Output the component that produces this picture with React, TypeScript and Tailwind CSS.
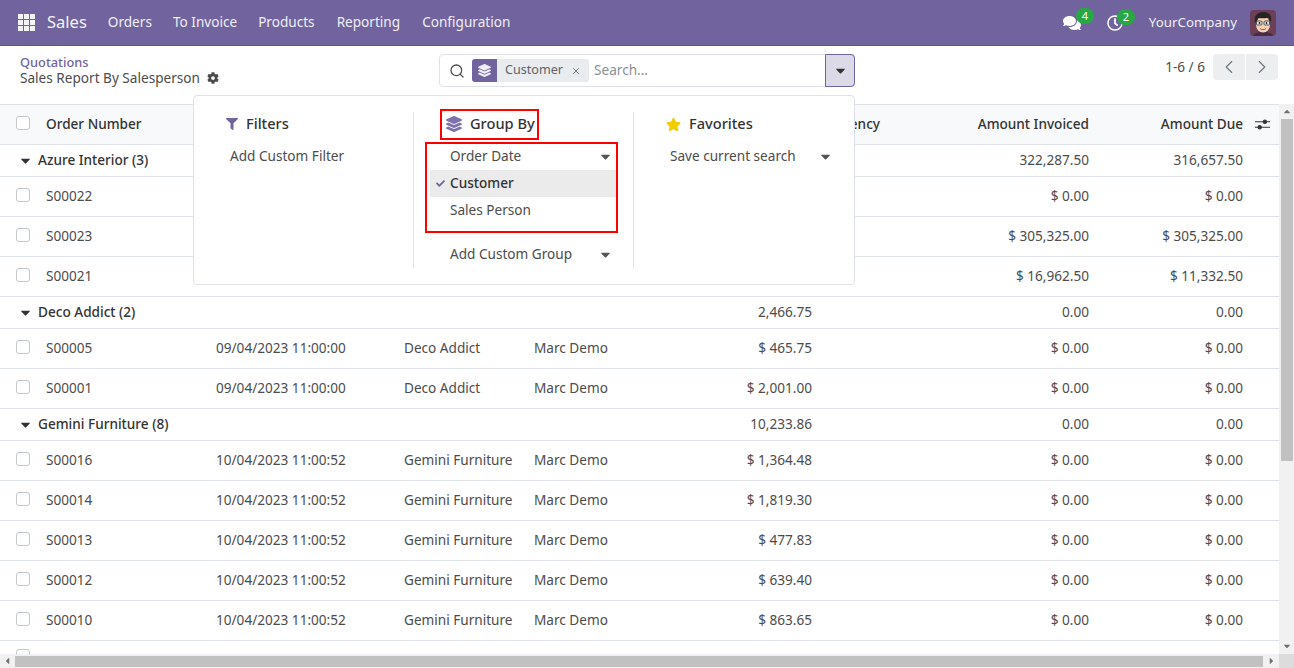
import React from "react";
import { FaComments, FaRegClock, FaCog, FaFilter, FaLayerGroup, FaStar, FaCheck, FaCaretDown } from "react-icons/fa";
import { ChevronLeft, ChevronRight, Search, X } from "lucide-react";

const cols = "grid grid-cols-[46px_170px_188px_130px_100px_178px_68px_209px_154px_36px] items-center";

type Row = { n: string; d: string; c: string; s: string; t: string; i: string; a: string };
type Group = { name: string; t: string; i: string; a: string; rows: Row[] };

const az = "Azure Interior";
const gf = "Gemini Furniture";
const groups: Group[] = [
  { name: "Azure Interior (3)", t: "322,287.50", i: "322,287.50", a: "316,657.50", rows: [
    { n: "S00022", d: "10/04/2023 11:00:52", c: az, s: "Marc Demo", t: "$ 0.00", i: "$ 0.00", a: "$ 0.00" },
    { n: "S00023", d: "10/04/2023 11:00:52", c: az, s: "Marc Demo", t: "$ 305,325.00", i: "$ 305,325.00", a: "$ 305,325.00" },
    { n: "S00021", d: "10/04/2023 11:00:52", c: az, s: "Marc Demo", t: "$ 16,962.50", i: "$ 16,962.50", a: "$ 11,332.50" },
  ]},
  { name: "Deco Addict (2)", t: "2,466.75", i: "0.00", a: "0.00", rows: [
    { n: "S00005", d: "09/04/2023 11:00:00", c: "Deco Addict", s: "Marc Demo", t: "$ 465.75", i: "$ 0.00", a: "$ 0.00" },
    { n: "S00001", d: "09/04/2023 11:00:00", c: "Deco Addict", s: "Marc Demo", t: "$ 2,001.00", i: "$ 0.00", a: "$ 0.00" },
  ]},
  { name: "Gemini Furniture (8)", t: "10,233.86", i: "0.00", a: "0.00", rows: [
    { n: "S00016", d: "10/04/2023 11:00:52", c: gf, s: "Marc Demo", t: "$ 1,364.48", i: "$ 0.00", a: "$ 0.00" },
    { n: "S00014", d: "10/04/2023 11:00:52", c: gf, s: "Marc Demo", t: "$ 1,819.30", i: "$ 0.00", a: "$ 0.00" },
    { n: "S00013", d: "10/04/2023 11:00:52", c: gf, s: "Marc Demo", t: "$ 477.83", i: "$ 0.00", a: "$ 0.00" },
    { n: "S00012", d: "10/04/2023 11:00:52", c: gf, s: "Marc Demo", t: "$ 639.40", i: "$ 0.00", a: "$ 0.00" },
    { n: "S00010", d: "10/04/2023 11:00:52", c: gf, s: "Marc Demo", t: "$ 863.65", i: "$ 0.00", a: "$ 0.00" },
  ]},
];

function Check() {
  return <span className="block w-[14px] h-[14px] ml-4 -mt-[3px] rounded-[3px] border border-[#c4c7cb] bg-white" />;
}

function Avatar() {
  return (
    <svg viewBox="0 0 26 26" className="w-[26px] h-[26px] rounded-[4px]">
      <rect width="26" height="26" fill="#6b3f58" />
      <path d="M3 26c1-3 5-4 10-4s9 1 10 4z" fill="#4a2c3f" />
      <ellipse cx="13" cy="14.500" rx="7" ry="8" fill="#f3d3ba" />
      <path d="M5 12C3.500 6 8 1.500 14 2c5 .5 8 3 7 9l-1.500 1-.5-4.500c-4 1-9 1-11 .5L6.500 13z" fill="#272424" />
      <rect x="6.500" y="11" width="5.500" height="4" rx="1" fill="#e8e8e4" stroke="#444" strokeWidth=".9" />
      <rect x="14" y="11" width="5.500" height="4" rx="1" fill="#e8e8e4" stroke="#444" strokeWidth=".9" />
      <circle cx="9.500" cy="13" r=".9" fill="#222" />
      <circle cx="16.500" cy="13" r=".9" fill="#222" />
      <path d="M10 18.500c1.500 1.500 4.500 1.500 6 0" stroke="#a5533f" strokeWidth="1" fill="none" />
    </svg>
  );
}

function Apps() {
  return (
    <svg viewBox="0 0 17 17" className="w-[17px] h-[17px]" fill="#f4f3f8">
      {[0, 6, 12].map((y) => [0, 6, 12].map((x) => <rect key={`${x}-${y}`} x={x} y={y} width="5" height="5" />))}
    </svg>
  );
}

function Sliders() {
  return (
    <svg viewBox="0 0 16 13" className="w-[15px] h-[13px]" fill="#333" stroke="#333" strokeWidth="1.100">
      <path d="M0 3.500h16M0 9.500h16" fill="none" />
      <circle cx="10.500" cy="3.500" r="1.800" />
      <circle cx="5" cy="9.500" r="1.800" />
    </svg>
  );
}

function Badge({ v, className }: { v: string; className: string }) {
  return <span className={`absolute -top-[6px] w-[18px] h-[16px] rounded-full bg-[#28a745] text-white text-[11px] leading-[15px] text-center ${className}`}>{v}</span>;
}

export default function App() {
  return (
    <div className="relative h-screen flex flex-col overflow-hidden bg-white text-[13.6px] text-[#4c4c4c] font-['Noto_Sans','Liberation_Sans',sans-serif]">
      <header className="h-[46px] shrink-0 flex items-center bg-[#71639e] border-b border-[#5f5389] text-[#f0eef5]">
        <span className="ml-[18px] mr-[12px]"><Apps /></span>
        <span className="text-[16.5px] mr-[21px] text-[#f4f3f8]">Sales</span>
        <nav className="flex gap-[21px]">
          <span>Orders</span><span>To Invoice</span><span>Products</span><span className="ml-px">Reporting</span><span className="ml-px">Configuration</span>
        </nav>
        <div className="ml-auto flex items-center">
          <span className="relative mr-[26px] text-white"><FaComments size={18} /><Badge v="4" className="left-[13px]" /></span>
          <span className="relative mr-[26px] text-white"><FaRegClock size={16} /><Badge v="2" className="left-[10px]" /></span>
          <span className="mr-[13px] text-[13.3px]">YourCompany</span>
          <span className="mr-[18px] flex"><Avatar /></span>
        </div>
      </header>

      <section className="h-[58px] shrink-0 flex relative">
        <div className="w-[439px] pl-5 pt-[8px] leading-[16px]">
          <div className="text-[12.8px] text-[#71639e] font-medium">Quotations</div>
          <div className="flex items-center gap-[7px]">Sales Report By Salesperson <FaCog size={12} className="text-[#4c4c4c]" /></div>
        </div>
        <div className="mt-2 w-[416px] h-[33px] flex rounded-[4px] border border-[#dee2e6] relative">
          <span className="ml-[9px] mr-[7px] self-center"><Search size={16} strokeWidth={1.9} className="text-[#4c4c4c]" /></span>
          <div className="self-center h-[23px] flex items-center rounded-[3px] bg-[#e9ecef] text-[12.6px] text-[#5f6368]">
            <span className="w-[25px] h-full flex items-center justify-center bg-[#71639e] rounded-l-[3px] text-[#efedf5]"><FaLayerGroup size={13} /></span>
            <span className="ml-2">Customer</span>
            <X size={10} strokeWidth={2} className="ml-[8px] mr-[8px]" />
          </div>
          <span className="ml-[5px] self-center text-[#8a8f95] -mt-px">Search...</span>
          <button className="ml-auto w-[30px] -my-px -mr-px flex items-center justify-center rounded-r-[4px] border border-[#71639e] bg-[#dcdae7] text-[#333]"><FaCaretDown size={15} /></button>
        </div>
        <div className="ml-auto flex items-start pt-2 mr-[16px]">
          <span className="mt-[3px] mr-2">1-6 / 6</span>
          <span className="w-[32px] h-[26px] flex items-center justify-center bg-[#eceef0] rounded-l-[4px] mr-px text-[#6c757d]"><ChevronLeft size={22} strokeWidth={1.2} /></span>
          <span className="w-[32px] h-[26px] flex items-center justify-center bg-[#eceef0] rounded-r-[4px] text-[#6c757d]"><ChevronRight size={22} strokeWidth={1.2} /></span>
        </div>
      </section>

      <main className="flex-1 min-h-0 flex flex-col">
        <div className="flex-1 min-h-0 flex">
          <div className="flex-1 min-w-0 overflow-hidden border-t border-[#dee2e6]">
            <div className={`${cols} h-[40px] bg-[#f8f9fa] border-b border-[#dee2e6] font-medium text-[#333]`}>
              <Check />
              <span className="col-span-4">Order Number</span>
              <span />
              <span className="text-right">Currency</span>
              <span className="text-right">Amount Invoiced</span>
              <span className="text-right">Amount Due</span>
              <span className="pl-3 flex"><Sliders /></span>
            </div>
            {groups.map((g) => (
              <div key={g.name}>
                <div className={`${cols} h-[32px] border-b border-[#dee2e6] font-medium text-[#333]`}>
                  <span className="col-span-5 pl-[18px] flex items-center gap-[5px]"><FaCaretDown size={15} />{g.name}</span>
                  <span className="text-right font-normal text-[#4c4c4c]">{g.t}</span>
                  <span />
                  <span className="text-right font-normal text-[#4c4c4c]">{g.i}</span>
                  <span className="text-right font-normal text-[#4c4c4c]">{g.a}</span>
                </div>
                {g.rows.map((r) => (
                  <div key={r.n} className={`${cols} h-[40px] border-b border-[#dee2e6]`}>
                    <Check />
                    <span>{r.n}</span>
                    <span>{r.d}</span>
                    <span>{r.c}</span>
                    <span>{r.s}</span>
                    <span className="text-right">{r.t}</span>
                    <span />
                    <span className="text-right">{r.i}</span>
                    <span className="text-right">{r.a}</span>
                  </div>
                ))}
              </div>
            ))}
            <div className="h-[40px] pt-[11px]"><Check /></div>
          </div>
          <div className="w-[15px] shrink-0 flex flex-col items-center bg-[#f1f1f1] text-[#6f6f6f]">
            <FaCaretDown size={10} className="rotate-180 mt-[3px]" />
            <div className="w-[12px] h-[342px] mt-[2px] bg-[#c1c1c1]" />
            <FaCaretDown size={10} className="mt-auto mb-[3px]" />
          </div>
        </div>
        <div className="h-[14px] shrink-0 flex items-center bg-[#f1f1f1] text-[#6f6f6f]">
          <span className="w-[15px] flex justify-center"><FaCaretDown size={10} className="rotate-90" /></span>
          <div className="w-[1248px] h-[11px] bg-[#c1c1c1]" />
          <span className="w-[16px] flex justify-center"><FaCaretDown size={10} className="-rotate-90" /></span>
          <span className="w-[15px] h-full bg-[#dcdcdc]" />
        </div>
      </main>

      <div className="absolute left-[193px] top-[95px] w-[662px] h-[190px] flex pt-4 bg-white rounded-[4px] border border-[#dee2e6]">
        <div className="w-[220px] h-[156px] border-r border-[#dee2e6]">
          <div className="pl-[32px] h-[24px] flex items-center gap-[8px] font-medium text-[#333] text-[14.6px]"><FaFilter size={12} className="text-[#71639e]" />Filters</div>
          <div className="pl-[36px] mt-[10px]">Add Custom Filter</div>
        </div>
        <div className="w-[220px] h-[156px] border-r border-[#dee2e6] relative">
          <div className="pl-[32px] h-[24px] flex items-center gap-[8px] font-medium text-[#333] text-[14.6px]"><FaLayerGroup size={16} className="text-[#7f71ab]" />Group By</div>
          <div className="absolute left-[26px] -top-[3px] w-[99px] h-[31px] border-2 border-[#ff0000]" />
          <div className="mt-[7px] ml-[16px] w-[188px]">
            <div className="h-[27px] pl-[20px] pr-[5px] flex items-center justify-between">Order Date<FaCaretDown size={15} className="text-[#555]" /></div>
            <div className="h-[27px] pl-[20px] relative flex items-center bg-[#ebebeb] font-medium text-[#333]"><FaCheck size={9} className="absolute left-[6px] text-[#71639e]" />Customer</div>
            <div className="h-[27px] pl-[20px] flex items-center">Sales Person</div>
          </div>
          <div className="absolute left-[11px] top-[30px] w-[193px] h-[91px] border-2 border-[#ff0000]" />
          <div className="mt-[17px] ml-[16px] w-[188px] h-[27px] pl-[20px] pr-[5px] flex items-center justify-between">Add Custom Group<FaCaretDown size={15} className="text-[#555]" /></div>
        </div>
        <div className="flex-1">
          <div className="pl-[32px] h-[24px] flex items-center gap-[8px] font-medium text-[#333] text-[14.6px]"><FaStar size={15} className="text-[#f3cc00]" />Favorites</div>
          <div className="mt-[7px] h-[27px] pl-[36px] pr-[21px] flex items-center justify-between">Save current search<FaCaretDown size={15} className="text-[#555]" /></div>
        </div>
      </div>
    </div>
  );
}
